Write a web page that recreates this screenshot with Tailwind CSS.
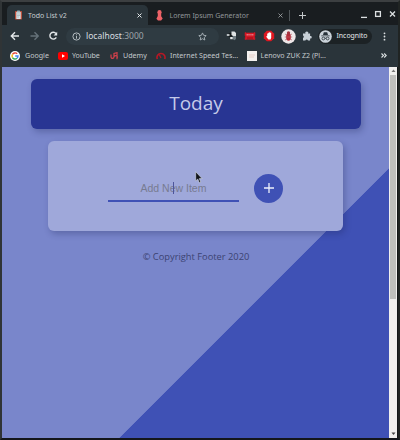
<!DOCTYPE html>
<html lang="en">
<head>
<meta charset="utf-8">
<title>Todo List v2</title>
<script src="https://cdn.jsdelivr.net/npm/@tailwindcss/browser@4"></script>
</head>
<body class="w-[400px] h-[440px] overflow-hidden bg-[#141719] font-['Noto_Sans',sans-serif] text-[#c3c9cc]">
<div class="w-[400px] h-[440px] flex flex-col border-t-2 border-t-[#3c3f41] border-l-2 border-l-[#303436] border-r-2 border-r-[#202423] border-b-2 border-b-[#14171c]">
  <!-- Tab strip -->
  <div class="h-[23px] shrink-0 flex items-end bg-[#191d20]">
    <div class="ml-[5px] w-[141px] h-5 rounded-t-[5px] bg-[#2a343a] flex items-center text-[7px] leading-none whitespace-nowrap">
      <svg class="ml-[7px] w-[9px] h-[10px] shrink-0" viewBox="0 0 9 10"><rect x="1" y="1" width="7" height="8.5" rx=".7" fill="#b9513f"/><rect x="2.300" y="2" width="4.400" height="7" fill="#d7e3e7"/><rect x="3" y=".4" width="3" height="2" rx=".5" fill="#9aafb8"/><path d="M3 4h3M3 5.5h3M3 7h2" stroke="#91a8b0" stroke-width=".6"/></svg>
      <span class="ml-[5px] w-[109px] text-[#c6cdd1]">Todo List v2</span>
      <svg class="w-[5px] h-[5px] shrink-0" viewBox="0 0 5 5" stroke="#e2e6e8" stroke-width="1"><path d="M.5.5l4 4M4.500.5l-4 4"/></svg>
    </div>
    <div class="h-5 w-[140px] flex items-center text-[7px] leading-none whitespace-nowrap">
      <svg class="ml-[8px] w-[7px] h-[11px] shrink-0" viewBox="0 0 7 11" fill="#ee6267"><circle cx="3.500" cy="2.200" r="2.100"/><path d="M1.800 3h3.400v3.200l1.500 2.300-1.600 2H2L.4 8.700 1.800 6z"/></svg>
      <span class="ml-[6.500px] w-[108px] text-[#92979a]">Lorem Ipsum Generator</span>
      <svg class="w-[5px] h-[5px] shrink-0" viewBox="0 0 5 5" stroke="#a7abad" stroke-width=".8"><path d="M.5.5l4 4M4.500.5l-4 4"/></svg>
    </div>
    <div class="h-5 flex items-center">
      <div class="ml-px w-px h-[11px] bg-[#50565a]"></div>
      <svg class="ml-[9px] w-[7px] h-[7px]" viewBox="0 0 7 7" stroke="#c4c8ca" stroke-width="1"><path d="M3.500 0v7M0 3.500h7"/></svg>
      <svg class="ml-[54px] mb-[2px] w-[37px] h-[9px]" viewBox="0 0 37 9" fill="none" stroke="#dce0e2" stroke-width="1.300"><path d="M1 7.400h6"/><rect x="15.600" y="1.600" width="4.800" height="4.800"/><path d="M30 1.500l5 5M35 1.500l-5 5"/></svg>
    </div>
  </div>
  <!-- Address toolbar -->
  <div class="h-[22px] shrink-0 flex items-center bg-[#2a343a]">
    <svg class="ml-[8px] w-[50px] h-[10px] shrink-0" viewBox="0 0 50 10" fill="none" stroke="#e3e7e9" stroke-width="1.400"><path d="M9 5H1.500M5 1.300L1.300 5 5 8.700"/><path d="M20.500 5H28M24.500 1.300L28.200 5l-3.700 3.700" stroke="#66727a"/><path d="M46 2.600A3.400 3.400 0 1 0 46.300 6.300"/><path d="M47.200.8v3.600h-3.600z" fill="#e3e7e9" stroke="none"/></svg>
    <div class="ml-[6px] w-[153px] h-[17px] rounded-full bg-[#2f3b42] flex items-center">
      <svg class="ml-[6px] w-[9px] h-[9px]" viewBox="0 0 9 9" fill="none" stroke="#c2c9cd" stroke-width=".9"><circle cx="4.500" cy="4.500" r="3.600"/><path d="M4.500 4v2.700M4.500 2.300v1"/></svg>
      <span class="ml-[5px] w-[111.500px] text-[8.500px] leading-none whitespace-nowrap text-[#d9dee0]">localhost<span class="text-[#9da5aa]">:3000</span></span>
      <svg class="w-[9px] h-[9px] shrink-0" viewBox="0 0 9 9" fill="none" stroke="#aab4ba" stroke-width=".9"><path d="M4.500.9l1.100 2.400 2.600.3-1.900 1.800.5 2.600-2.300-1.300L2.200 8l.5-2.600L.8 3.600l2.600-.3z"/></svg>
    </div>
    <svg class="ml-[7px] w-[12px] h-[12px] shrink-0" viewBox="0 0 12 12"><circle cx="4.500" cy="5" r="2.300" fill="#121719"/><path d="M.8 4h2.700v2H.8z" fill="#b8bec0"/><path d="M5.500 1.500h3l1.500 1.500v3H7l-1.500-1z" fill="#dfe2e3"/><path d="M7 6h3v3l-1.500 1.200L6.500 9z" fill="#6f7b81"/><path d="M4.200 7h2.500v2.200H4.200z" fill="#e6e8e9"/></svg>
    <svg class="ml-[6px] w-[12px] h-[12px] shrink-0" viewBox="0 0 12 12"><path d="M1 2.500l1.500.5h7l1.500-.5v3l-.5 1 .5 3-2-.3H3l-2 .3.500-3-.5-1z" fill="#d51725" stroke="#d51725" stroke-width=".6"/><path d="M3.200 4v1.500M5 4v1.500M7 4v1.500M8.800 4v1.500" stroke="#f0c3c5" stroke-width=".8"/><path d="M3 8h6" stroke="#8c1119" stroke-width=".9"/></svg>
    <svg class="ml-[7px] w-[12px] h-[12px] shrink-0" viewBox="0 0 12 12"><path d="M3.800.8h4.400l3 3v4.400l-3 3H3.800l-3-3V3.800z" fill="#df1721"/><path d="M4.200 6V3.500h1V2.700h1V2.200h1v.6h1v5L7.500 9.400H5.400L3.200 6.700l.6-.6z" fill="#fff"/></svg>
    <svg class="ml-[5.500px] w-[15px] h-[15px] shrink-0" viewBox="0 0 15 15"><circle cx="7.500" cy="7.500" r="7.200" fill="#eee7e8"/><ellipse cx="7.500" cy="8" rx="2.400" ry="3.800" fill="#b92937"/><circle cx="7.500" cy="4" r="1.700" fill="#a33440"/><path d="M4 5l2 1M11 5L9 6M3.800 8h7.400M4 11l2-1M11 11l-2-1" stroke="#b45d66" stroke-width=".7"/></svg>
    <svg class="ml-[6px] w-[10px] h-[10px] shrink-0" viewBox="0 0 10 10" fill="#c8d0d7"><path d="M1 2.500h2.500a1.400 1.400 0 1 1 2.600 0h2V5a1.300 1.300 0 1 1 0 2.500V9.500H6a1.400 1.400 0 0 0-2.600 0H1V7a1.300 1.300 0 0 0 0-2.400z"/></svg>
    <div class="ml-[6px] w-[54px] h-[15px] rounded-full bg-[#1c2225] flex items-center">
      <svg class="ml-px w-[13px] h-[13px] shrink-0" viewBox="0 0 13 13"><circle cx="6.500" cy="6.500" r="6.300" fill="#cbd3da"/><path d="M4.800 2.300h3.400L9 5H4zM2.300 5.500h8.400v.8H2.300z" fill="#273139"/><g fill="none" stroke="#273139" stroke-width=".8"><circle cx="4.400" cy="8.500" r="1.400"/><circle cx="8.600" cy="8.500" r="1.400"/><path d="M5.800 8.300h1.400"/></g></svg>
      <span class="ml-[5px] text-[6.900px] leading-none text-[#e8ebec]">Incognito</span>
    </div>
    <svg class="ml-[11px] w-[3px] h-[9px] shrink-0" viewBox="0 0 3 9" fill="#dde1e3"><circle cx="1.500" cy="1.300" r=".9"/><circle cx="1.500" cy="4.500" r=".9"/><circle cx="1.500" cy="7.700" r=".9"/></svg>
  </div>
  <!-- Bookmarks -->
  <div class="h-5 shrink-0 pb-[3px] flex items-center bg-[#2a343a] text-[7.100px] leading-none whitespace-nowrap">
    <svg class="ml-[8px] w-[10px] h-[10px] shrink-0" viewBox="0 0 10 10"><circle cx="5" cy="5" r="5" fill="#fff"/><g fill="none" stroke-width="1.400"><path d="M2.500 3.400A3 3 0 0 1 7.200 2.800" stroke="#e64335"/><path d="M2.500 3.400a3 3 0 0 0 0 3.200" stroke="#f4b400"/><path d="M2.500 6.600A3 3 0 0 0 7 7.300" stroke="#34a853"/><path d="M7 7.300A3 3 0 0 0 8 5H5.200" stroke="#4285f4"/></g></svg>
    <span class="ml-[5px] w-[33px]">Google</span>
    <svg class="w-[10px] h-[8px] shrink-0" viewBox="0 0 10 8"><rect width="10" height="8" rx="2" fill="#f00"/><path d="M4 2.300v3.400L7 4z" fill="#fff"/></svg>
    <span class="ml-[4px] w-[38px] tracking-[-0.15px]">YouTube</span>
    <svg class="w-[9px] h-[8px] shrink-0" viewBox="0 0 9 8" fill="none" stroke="#d5404b" stroke-width="1.200"><path d="M1 2.500v2.300c0 2.200 3 2.200 3 0V1.500L7 .7v6.500M4 4.500c2-2 4-.4 3 1.500"/></svg>
    <span class="ml-[4px] w-[33px]">Udemy</span>
    <svg class="w-[10px] h-[8px] shrink-0" viewBox="0 0 10 8" fill="none" stroke="#b71825"><path d="M1.300 7A4 4 0 1 1 8.700 7" stroke-width="1.600"/><path d="M5 6L3.200 2.500" stroke-width="1.200"/></svg>
    <span class="ml-[4px] w-[76.500px]">Internet Speed Tes...</span>
    <svg class="w-[10px] h-[10px] shrink-0" viewBox="0 0 10 10"><rect width="10" height="10" fill="#f3f0ee"/><path d="M2 4h6M2 6h5" stroke="#dfc2b7" stroke-width=".7"/></svg>
    <span class="ml-[4px] w-[120px]">Lenovo ZUK Z2 (Pl...</span>
    <svg class="w-[6px] h-[5px] shrink-0" viewBox="0 0 6 5" fill="none" stroke="#dbe0e2" stroke-width="1.100"><path d="M.5.5l2 2-2 2M3.200.5l2 2-2 2"/></svg>
  </div>
  <!-- Page -->
  <div class="h-[371px] flex">
    <main class="w-[387px] h-[371px] pl-px flex flex-col items-center bg-[linear-gradient(135deg,#7986cb_345px,#3f51b5_345.500px)]">
      <h1 class="mt-[12px] w-[330px] h-[50px] pb-px shrink-0 rounded-[6px] bg-[#283593] shadow-[2px_3px_6px_rgba(30,35,90,0.3)] flex items-center justify-center font-['Open_Sans',sans-serif] font-medium text-[19px] leading-none text-[#c5cae9]">Today</h1>
      <section class="mt-[12px] mr-px w-[295px] h-[90px] shrink-0 rounded-[6px] bg-[#9fa8da] shadow-[2px_3px_6px_rgba(30,35,90,0.3)] flex items-center pt-1">
        <div class="ml-[60px] w-[131px] h-[26px] mt-[2px] border-b-2 border-[#3f51b5] flex items-center justify-center relative">
          <span class="font-['Liberation_Sans',sans-serif] text-[10.500px] leading-none pt-px text-[#777b91]">Add New Item</span>
          <div class="absolute left-[65px] top-[6px] w-px h-[12px] bg-[#4e559b]"></div>
          <svg class="absolute left-[87px] -top-[5px] w-[8px] h-[13px]" viewBox="0 0 8 13"><path d="M.7.7v9.200l2.100-1.800 1.500 3.700 1.500-.7-1.500-3.500h2.800z" fill="#12151b" stroke="#d9ddea" stroke-width=".6"/></svg>
        </div>
        <button class="ml-[15px] w-[29px] h-[29px] rounded-full bg-[#3f51b5] flex items-center justify-center">
          <svg class="w-[10px] h-[10px]" viewBox="0 0 10 10" stroke="#edf0fc" stroke-width="1.300"><path d="M5 0v10M0 5h10"/></svg>
        </button>
      </section>
      <footer class="mt-[20px] font-['Open_Sans',sans-serif] text-[9.300px] leading-[12px] text-[#3c4372]">© Copyright Footer 2020</footer>
    </main>
    <!-- Scrollbar -->
    <div class="w-[8px] h-[371px] bg-[#f0efee] flex flex-col items-center">
      <svg class="w-[9px] h-[8px] shrink-0" viewBox="0 0 9 8"><path d="M2.500 5h4L4.500 2.500z" fill="#777"/></svg>
      <div class="w-[6px] h-[224px] bg-[#bfbfbd]"></div>
      <svg class="mt-auto w-[9px] h-[8px] shrink-0" viewBox="0 0 9 8"><path d="M2.500 2.500h4L4.500 5z" fill="#444"/></svg>
    </div>
  </div>
</div>
</body>
</html>
